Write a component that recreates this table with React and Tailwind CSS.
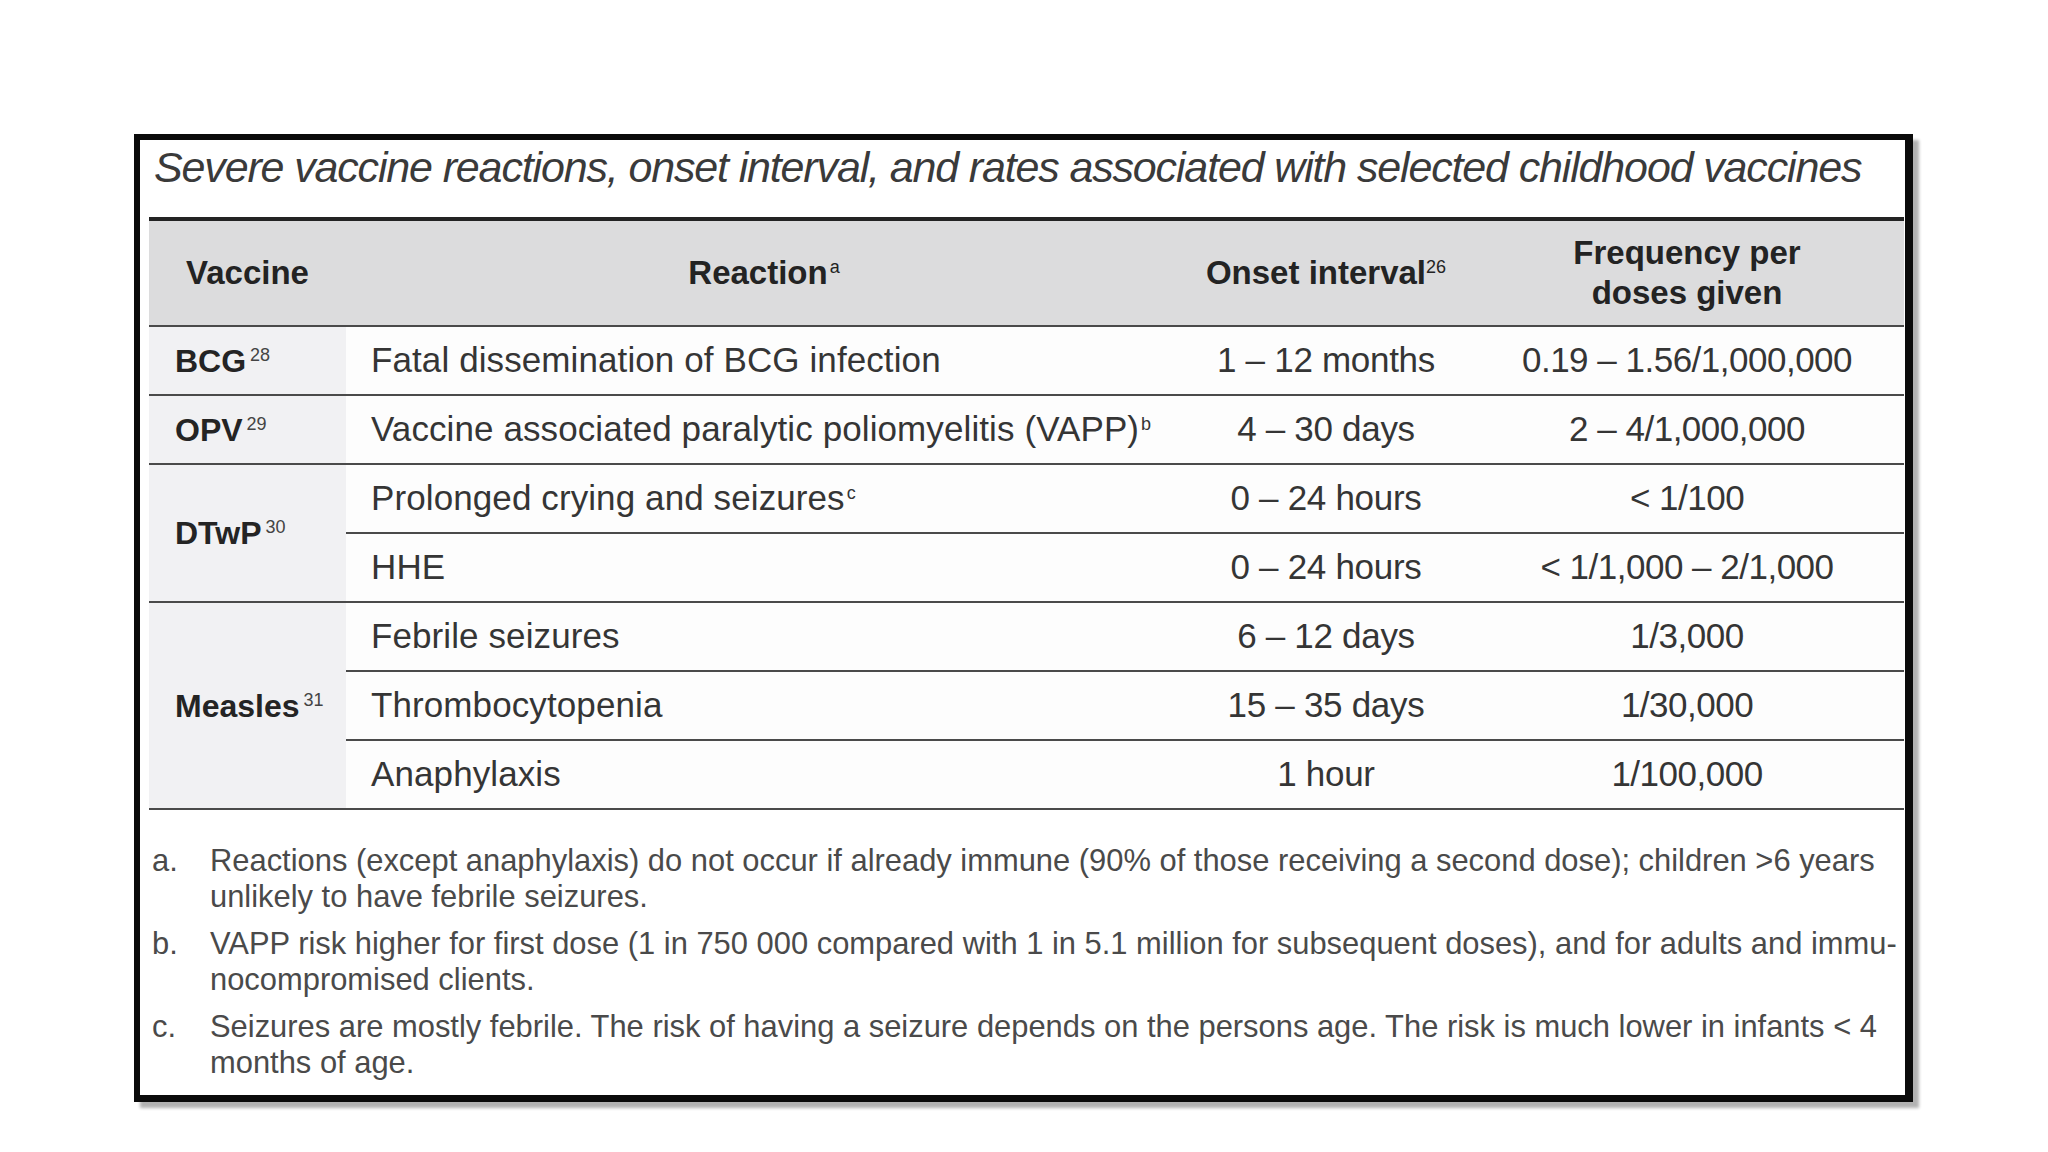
import React from 'react';

// Severe vaccine reactions table, drawn as a framed slide
const groups = [
  {
    vaccine: 'BCG',
    ref: '28',
    rows: [['Fatal dissemination of BCG infection', null, '1 – 12 months', '0.19 – 1.56/1,000,000']],
  },
  {
    vaccine: 'OPV',
    ref: '29',
    rows: [['Vaccine associated paralytic poliomyelitis (VAPP)', 'b', '4 – 30 days', '2 – 4/1,000,000']],
  },
  {
    vaccine: 'DTwP',
    ref: '30',
    rows: [
      ['Prolonged crying and seizures', 'c', '0 – 24 hours', '< 1/100'],
      ['HHE', null, '0 – 24 hours', '< 1/1,000 – 2/1,000'],
    ],
  },
  {
    vaccine: 'Measles',
    ref: '31',
    rows: [
      ['Febrile seizures', null, '6 – 12 days', '1/3,000'],
      ['Thrombocytopenia', null, '15 – 35 days', '1/30,000'],
      ['Anaphylaxis', null, '1 hour', '1/100,000'],
    ],
  },
];

const spans = { 1: 'row-span-1', 2: 'row-span-2', 3: 'row-span-3' };

const notes = [
  {
    label: 'a.',
    lines: [
      'Reactions (except anaphylaxis) do not occur if already immune (90% of those receiving a second dose); children >6 years',
      'unlikely to have febrile seizures.',
    ],
  },
  {
    label: 'b.',
    lines: [
      'VAPP risk higher for first dose (1 in 750 000 compared with 1 in 5.1 million for subsequent doses), and for adults and immu-',
      'nocompromised clients.',
    ],
  },
  {
    label: 'c.',
    lines: [
      'Seizures are mostly febrile. The risk of having a seizure depends on the persons age. The risk is much lower in infants < 4',
      'months of age.',
    ],
  },
];

function Sup({ children, className = '' }) {
  return <sup className={`text-[18px] font-normal -top-[11px] ${className}`}>{children}</sup>;
}

export default function App() {
  return (
    <div className="w-full h-[1152px] bg-white pt-[134px] pl-[134px] font-['Liberation_Sans',Arial,sans-serif]">
      <div className="w-[1779px] h-[968px] bg-white border-l-[6px] border-t-[6px] border-r-[8px] border-b-[7px] border-[#0b0b0b] shadow-[6px_6px_3px_rgba(0,0,0,0.3)] pl-[9px] pr-[1px]">
        {/* title */}
        <div className="h-[77px] pt-[6px] pl-[5px] text-[43px] leading-[43px] italic tracking-[-1.15px] text-[#3a3a3a] whitespace-nowrap">
          Severe vaccine reactions, onset interval, and rates associated with selected childhood vaccines
        </div>
        <div className="h-[4px] bg-[#232323]" />

        {/* header */}
        <div className="grid grid-cols-[197px_836px_288px_434px] h-[106px] bg-[#dcdcdd] border-b-2 border-[#4a4a4a] text-[33px] font-bold text-[#232323]">
          <div className="flex items-center justify-center">Vaccine</div>
          <div className="flex items-center justify-center">
            <span>
              Reaction<Sup className="ml-[2px]">a</Sup>
            </span>
          </div>
          <div className="flex items-center justify-center">
            <span>
              Onset interval<Sup>26</Sup>
            </span>
          </div>
          <div className="flex flex-col items-center justify-center leading-[40px]">
            <span>Frequency per</span>
            <span>doses given</span>
          </div>
        </div>

        {/* body */}
        <div className="grid grid-cols-[197px_836px_288px_434px] auto-rows-[69px] text-[35px] text-[#353535]">
          {groups.map((g) => (
            <React.Fragment key={g.vaccine}>
              <div
                className={`${spans[g.rows.length]} col-start-1 flex items-center pl-[26px] bg-[#f1f1f3] border-b-2 border-[#4a4a4a] text-[32px] font-bold text-[#242424]`}
              >
                <span>
                  {g.vaccine}
                  <Sup className="ml-[4px] text-[#444]">{g.ref}</Sup>
                </span>
              </div>
              {g.rows.map((r) => (
                <React.Fragment key={r[0]}>
                  <div className="col-start-2 flex items-center pl-[25px] bg-[#fdfdfd] border-b-2 border-[#4a4a4a] whitespace-nowrap tracking-[0.1px]">
                    <span>
                      {r[0]}
                      {r[1] && <Sup className="ml-[2px]">{r[1]}</Sup>}
                    </span>
                  </div>
                  <div className="flex items-center justify-center bg-[#fdfdfd] border-b-2 border-[#4a4a4a] whitespace-nowrap tracking-[-0.3px]">
                    {r[2]}
                  </div>
                  <div className="flex items-center justify-center bg-[#fdfdfd] border-b-2 border-[#4a4a4a] whitespace-nowrap tracking-[-0.5px]">
                    {r[3]}
                  </div>
                </React.Fragment>
              ))}
            </React.Fragment>
          ))}
        </div>

        {/* footnotes */}
        <div className="mt-[33px] flex flex-col gap-[11px] text-[30.9px] leading-[36px] text-[#4a4a4a]">
          {notes.map((n) => (
            <div key={n.label} className="flex">
              <div className="w-[61px] pl-[3px] shrink-0">{n.label}</div>
              <div className="flex flex-col whitespace-nowrap">
                {n.lines.map((l) => (
                  <span key={l}>{l}</span>
                ))}
              </div>
            </div>
          ))}
        </div>
      </div>
    </div>
  );
}
